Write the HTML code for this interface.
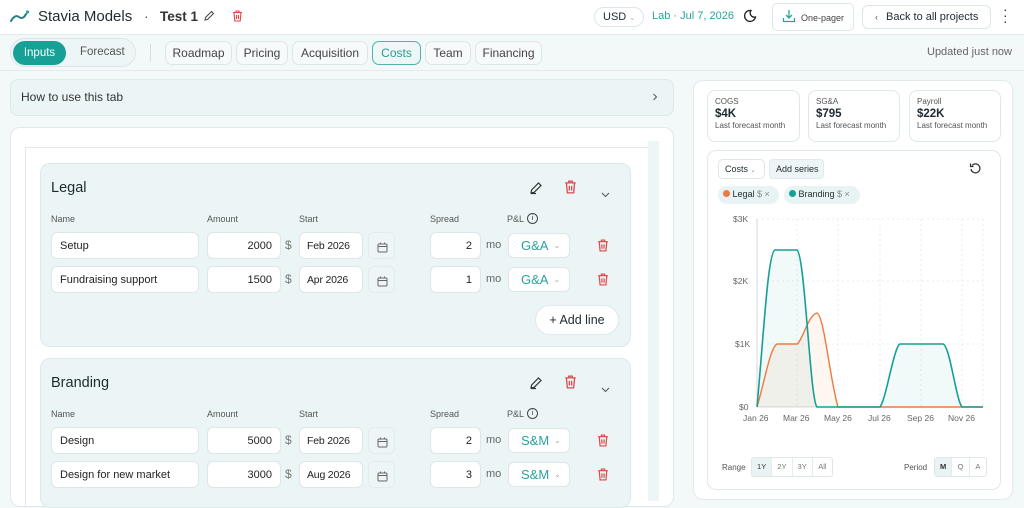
<!DOCTYPE html>
<html><head><meta charset="utf-8"><style>
*{box-sizing:border-box;margin:0;padding:0;white-space:nowrap}
body{width:1024px;height:494px;overflow:hidden;background:#f3f8f9;font-family:"Liberation Sans",sans-serif;color:#1f2a30;position:relative}
.a{position:absolute}
.top{left:0;top:0;width:1024px;height:35px;background:#fff;border-bottom:1px solid #e3ecee}
.pill{border:1px solid #dde7e9;border-radius:7px;background:#f7fafb;font-size:12px;color:#444;display:flex;align-items:center;justify-content:center;height:24px;top:41px}
.lbl{font-size:9px;color:#555}
.inp{background:#fff;border:1px solid #dde6e8;border-radius:6px;height:27px;font-size:11px;display:flex;align-items:center;padding:0 8px;color:#222;overflow:hidden}
.r{justify-content:flex-end}
.cal{background:#eef5f6;border:1px solid #e2ebed;border-radius:6px;width:27px;height:27px}
.sel{background:#fff;border:1px solid #dde6e8;border-radius:6px;height:25px;width:62px;font-size:13px;color:#2aa39a;display:flex;align-items:center;padding-left:12px}
.sel i{font-style:normal;font-size:8px;color:#aaa;margin-left:5px}
.card{background:#ebf5f6;border:1px solid #dce9eb;border-radius:10px}
.stat{background:#fff;border:1px solid #dfe8ea;border-radius:8px;top:90px;width:93px;height:52px;padding:6px 7px}
.stat .t{font-size:8px;color:#555}.stat .v{font-size:11.5px;font-weight:bold;margin-top:2px}.stat .s{font-size:8px;color:#555;margin-top:1px}
.ax{font-size:8.5px;color:#666}
</style></head><body>
<div class="a top"></div>
<svg class="a" style="left:10px;top:8px" width="20" height="16" viewBox="0 0 20 16"><path d="M1 13 Q5 6 9 9 T16 6" fill="none" stroke="#2a7d85" stroke-width="2" stroke-linecap="round"/><circle cx="17.5" cy="4" r="1.6" fill="#2aa39a"/></svg>
<div class="a" style="left:38px;top:8px;font-size:15px;font-weight:500">Stavia Models</div>
<div class="a" style="left:144px;top:8px;font-size:14px;color:#555">·</div>
<div class="a" style="left:160px;top:9px;font-size:13.5px;font-weight:bold;color:#333">Test 1</div>
<svg class="a" style="left:203px;top:10px" width="12" height="12" viewBox="0 0 12 12"><path d="M2 10 L2.5 7.5 L8.5 1.5 L10.5 3.5 L4.5 9.5 Z" fill="none" stroke="#444" stroke-width="1"/></svg>
<svg class="a" style="left:232px;top:10px" width="11" height="12" viewBox="0 0 11 12"><path d="M1 2.5H10M4 2.5V1H7V2.5M2 2.5L2.8 11H8.2L9 2.5M4.5 5V9M6.5 5V9" fill="none" stroke="#e04646" stroke-width="1.1"/></svg>
<div class="a" style="left:594px;top:7px;width:50px;height:20px;border:1px solid #dde6e8;border-radius:10px;font-size:11px;padding:3px 0 0 8px">USD <span style="font-size:7px;color:#999">⌄</span></div>
<div class="a" style="left:652px;top:10px;font-size:11px;color:#2aa39a">Lab · Jul 7, 2026</div>
<svg class="a" style="left:743px;top:9px" width="14" height="14" viewBox="0 0 14 14"><path d="M8 1.5 A5.5 5.5 0 1 0 12.5 8 A4.2 4.2 0 0 1 8 1.5Z" fill="none" stroke="#222" stroke-width="1.3"/></svg>
<div class="a" style="left:772px;top:3px;width:82px;height:28px;border:1px solid #dde6e8;border-radius:5px;font-size:9px;color:#444;padding:9px 0 0 28px">One-pager</div>
<svg class="a" style="left:782px;top:9px" width="14" height="14" viewBox="0 0 14 14"><path d="M7 1V9M4 6L7 9L10 6M1.5 9V12.5H12.5V9" fill="none" stroke="#2aa39a" stroke-width="1.3"/></svg>
<div class="a" style="left:862px;top:5px;width:129px;height:24px;border:1px solid #dde6e8;border-radius:6px;font-size:11px;padding:5px 0 0 12px"><span style="font-size:9px;color:#555;margin-right:8px">‹</span>Back to all projects</div>
<div class="a" style="left:1003px;top:6px;font-size:14px;line-height:6px;color:#333;width:4px;white-space:normal">·<br>·<br>·</div>
<div class="a" style="left:10px;top:38px;width:126px;height:29px;border:1px solid #dbe6e8;border-radius:15px;background:#eef5f6"></div>
<div class="a" style="left:13px;top:41px;width:53px;height:24px;border-radius:12px;background:#16a096;color:#fff;font-size:11.5px;text-align:center;line-height:24px">Inputs</div>
<div class="a" style="left:80px;top:46px;font-size:11.5px;color:#555">Forecast</div>
<div class="a" style="left:150px;top:44px;width:1px;height:18px;background:#d5dfe1"></div>
<div class="a pill" style="left:165px;width:67px">Roadmap</div>
<div class="a pill" style="left:236px;width:52px">Pricing</div>
<div class="a pill" style="left:292px;width:76px">Acquisition</div>
<div class="a pill" style="left:372px;width:49px;border-color:#52b3ab;color:#2a9a92;background:#eef7f7">Costs</div>
<div class="a pill" style="left:425px;width:46px">Team</div>
<div class="a pill" style="left:475px;width:67px">Financing</div>
<div class="a" style="left:927px;top:46px;font-size:11px;color:#666">Updated just now</div>
<div class="a" style="left:0;top:70px;width:1024px;height:1px;background:#e3ecee"></div>
<div class="a card" style="left:10px;top:79px;width:664px;height:37px;border-radius:8px"></div>
<div class="a" style="left:21px;top:90px;font-size:12px;color:#333">How to use this tab</div>
<svg class="a" style="left:652px;top:93px" width="6" height="8" viewBox="0 0 6 8"><path d="M1.5 1L4.5 4L1.5 7" fill="none" stroke="#555" stroke-width="1"/></svg>
<div class="a" style="left:10px;top:127px;width:664px;height:380px;background:#fff;border:1px solid #dfe8ea;border-radius:10px"></div>
<div class="a" style="left:25px;top:147px;width:623px;height:360px;border-left:1px solid #e3eaec;border-top:1px solid #e3eaec"></div>
<div class="a" style="left:648px;top:141px;width:11px;height:360px;background:#eef5f6"></div>
<div class="a card" style="left:40px;top:163px;width:591px;height:184px"></div>
<div class="a card" style="left:40px;top:358px;width:591px;height:150px"></div>
<div id="rows"></div>
<div class="a" style="left:693px;top:80px;width:320px;height:420px;background:#fff;border:1px solid #e2eaec;border-radius:10px"></div>
<div class="a stat" style="left:707px"><div class="t">COGS</div><div class="v">$4K</div><div class="s">Last forecast month</div></div>
<div class="a stat" style="left:808px;width:92px"><div class="t">SG&amp;A</div><div class="v">$795</div><div class="s">Last forecast month</div></div>
<div class="a stat" style="left:909px;width:92px"><div class="t">Payroll</div><div class="v">$22K</div><div class="s">Last forecast month</div></div>
<div class="a" style="left:707px;top:150px;width:294px;height:340px;border:1px solid #dfe8ea;border-radius:9px;background:#fff"></div>
<div class="a" style="left:718px;top:159px;width:47px;height:20px;border:1px solid #dde6e8;border-radius:5px;font-size:9px;padding:4px 0 0 6px">Costs <span style="font-size:6px;color:#888">⌄</span></div>
<div class="a" style="left:769px;top:159px;width:55px;height:20px;background:#eef5f6;border:1px solid #e2eaec;border-radius:4px;font-size:9px;padding:4px 0 0 6px">Add series</div>
<svg class="a" style="left:969px;top:162px" width="13" height="13" viewBox="0 0 13 13"><path d="M3 3.5 A4.5 4.5 0 1 1 2 7" fill="none" stroke="#333" stroke-width="1.2"/><path d="M1.5 1.5V4.5H4.5" fill="none" stroke="#333" stroke-width="1.2"/></svg>
<div class="a" style="left:718px;top:186px;width:61px;height:18px;background:#e8f3f4;border-radius:9px;font-size:9px;padding:3px 0 0 5px"><span style="display:inline-block;width:7px;height:7px;border-radius:50%;background:#f0793f"></span> Legal <span style="color:#888">$ ×</span></div>
<div class="a" style="left:784px;top:186px;width:76px;height:18px;background:#e8f3f4;border-radius:9px;font-size:9px;padding:3px 0 0 5px"><span style="display:inline-block;width:7px;height:7px;border-radius:50%;background:#15a096"></span> Branding <span style="color:#888">$ ×</span></div>
<svg class="a" style="left:707px;top:210px" width="294" height="220" viewBox="707 210 294 220">
<g stroke="#e2e8ea" stroke-dasharray="2 3" stroke-width="0.8">
<line x1="757" y1="219" x2="983" y2="219"/><line x1="757" y1="281" x2="983" y2="281"/><line x1="757" y1="344" x2="983" y2="344"/>
<line x1="797" y1="219" x2="797" y2="407"/><line x1="838" y1="219" x2="838" y2="407"/><line x1="880" y1="219" x2="880" y2="407"/><line x1="921" y1="219" x2="921" y2="407"/><line x1="962" y1="219" x2="962" y2="407"/><line x1="983" y1="219" x2="983" y2="407"/>
</g>
<line x1="757" y1="219" x2="757" y2="407" stroke="#ccd" stroke-width="0.8"/>
<line x1="757" y1="407" x2="983" y2="407" stroke="#ccd" stroke-width="0.8"/>
<path d="M757 407 C765 380 770 348 777 344 L797 344 C803 340 808 315 817 313 C824 315 830 380 838 407 Z" fill="#f0793f" fill-opacity="0.07"/>
<path d="M757 407 C764 330 768 252 775 250 L797 250 C805 255 810 400 817 407 L880 407 C886 400 894 346 900 344 L943 344 C950 346 956 400 962 407 L983 407 Z" fill="#15a096" fill-opacity="0.06"/>
<path d="M757 407 C765 380 770 348 777 344 L797 344 C803 340 808 315 817 313 C824 315 830 380 838 407 L983 407" fill="none" stroke="#f0793f" stroke-width="1.4"/>
<path d="M757 407 C764 330 768 252 775 250 L797 250 C805 255 810 400 817 407 L880 407 C886 400 894 346 900 344 L943 344 C950 346 956 400 962 407 L983 407" fill="none" stroke="#15a096" stroke-width="1.6"/>
</svg>
<div class="a ax" style="left:733px;top:214px">$3K</div>
<div class="a ax" style="left:733px;top:276px">$2K</div>
<div class="a ax" style="left:735px;top:339px">$1K</div>
<div class="a ax" style="left:739px;top:402px">$0</div>
<div class="a ax" style="left:743px;top:413px">Jan 26</div>
<div class="a ax" style="left:783px;top:413px">Mar 26</div>
<div class="a ax" style="left:824px;top:413px">May 26</div>
<div class="a ax" style="left:868px;top:413px">Jul 26</div>
<div class="a ax" style="left:907px;top:413px">Sep 26</div>
<div class="a ax" style="left:948px;top:413px">Nov 26</div>
<div class="a" style="left:722px;top:463px;font-size:8px;color:#555">Range</div>
<div class="a" style="left:751px;top:457px;width:82px;height:20px;border:1px solid #dfe7e9;border-radius:3px;display:flex;font-size:7.5px;color:#777">
<div style="flex:1;background:#eaf3f4;text-align:center;line-height:18px;color:#333">1Y</div><div style="flex:1;text-align:center;line-height:18px;border-left:1px solid #e5ecee">2Y</div><div style="flex:1;text-align:center;line-height:18px;border-left:1px solid #e5ecee">3Y</div><div style="flex:1;text-align:center;line-height:18px;border-left:1px solid #e5ecee">All</div></div>
<div class="a" style="left:904px;top:463px;font-size:8px;color:#555">Period</div>
<div class="a" style="left:934px;top:457px;width:53px;height:20px;border:1px solid #dfe7e9;border-radius:3px;display:flex;font-size:7.5px;color:#777">
<div style="flex:1;background:#eaf3f4;text-align:center;line-height:18px;color:#333;font-weight:bold">M</div><div style="flex:1;text-align:center;line-height:18px;border-left:1px solid #e5ecee">Q</div><div style="flex:1;text-align:center;line-height:18px;border-left:1px solid #e5ecee">A</div></div>
<script>
var pen='<svg width="14" height="14" viewBox="0 0 14 14"><path d="M2 12 L2.6 9 L9.5 2 L12 4.5 L5 11.4 Z M2 12.5 H7" fill="none" stroke="#333" stroke-width="1.2"/></svg>';
var chev='<svg width="9" height="6" viewBox="0 0 9 6"><path d="M1 1L4.5 4.5L8 1" fill="none" stroke="#555" stroke-width="1"/></svg>';
function trash(c,s){return '<svg width="'+s+'" height="'+(s+1)+'" viewBox="0 0 11 12"><path d="M1 2.5H10M4 2.5V1H7V2.5M2 2.5L2.8 11H8.2L9 2.5M4.5 5V9M6.5 5V9" fill="none" stroke="'+c+'" stroke-width="1.1"/></svg>';}
var cal='<svg width="11" height="11" viewBox="0 0 11 11"><rect x="1" y="2" width="9" height="8" rx="1" fill="none" stroke="#666"/><path d="M1 4.5H10M3.5 0.5V2.5M7.5 0.5V2.5" stroke="#666"/></svg>';
var h='';
function sec(y,title,rows,pl){
 h+='<div class="a" style="left:51px;top:'+(y+17)+'px;font-size:14.5px;font-weight:500">'+title+'</div>';
 h+='<div class="a" style="left:529px;top:'+(y+18)+'px">'+pen+'</div>';
 h+='<div class="a" style="left:564px;top:'+(y+17)+'px">'+trash('#e04646',13)+'</div>';
 h+='<div class="a" style="left:601px;top:'+(y+22)+'px">'+chev+'</div>';
 var ly=y+51;
 [['Name',51],['Amount',207],['Start',299],['Spread',430],['P&amp;L',507]].forEach(function(l){h+='<div class="a lbl" style="left:'+l[1]+'px;top:'+ly+'px">'+l[0]+'</div>';});
 h+='<div class="a" style="left:527px;top:'+(ly-1)+'px;width:11px;height:11px;border:1px solid #444;border-radius:50%;font-size:7px;text-align:center;line-height:9px">i</div>';
 rows.forEach(function(r,i){var t=y+69+i*34;
  h+='<div class="a inp" style="left:51px;top:'+t+'px;width:148px">'+r[0]+'</div>';
  h+='<div class="a inp r" style="left:207px;top:'+t+'px;width:74px">'+r[1]+'</div>';
  h+='<div class="a" style="left:285px;top:'+(t+6)+'px;font-size:12px;color:#777">$</div>';
  h+='<div class="a inp" style="left:299px;top:'+t+'px;width:64px;padding:0 7px;font-size:10.5px;letter-spacing:-0.2px">'+r[2]+'</div>';
  h+='<div class="a cal" style="left:368px;top:'+t+'px;padding:7px 0 0 8px">'+cal+'</div>';
  h+='<div class="a inp r" style="left:430px;top:'+t+'px;width:51px">'+r[3]+'</div>';
  h+='<div class="a" style="left:486px;top:'+(t+7)+'px;font-size:11px;color:#666">mo</div>';
  h+='<div class="a sel" style="left:508px;top:'+(t+1)+'px">'+pl+'<i>⌄</i></div>';
  h+='<div class="a" style="left:597px;top:'+(t+7)+'px">'+trash('#e04646',12)+'</div>';
 });
}
sec(163,'Legal',[['Setup','2000','Feb 2026','2'],['Fundraising support','1500','Apr 2026','1']],'G&amp;A');
sec(358,'Branding',[['Design','5000','Feb 2026','2'],['Design for new market','3000','Aug 2026','3']],'S&amp;M');
h+='<div class="a" style="left:535px;top:305px;width:84px;height:30px;background:#fff;border:1px solid #dfe8ea;border-radius:15px;font-size:12.5px;text-align:center;line-height:28px">+ Add line</div>';
document.getElementById('rows').innerHTML=h;
</script>
</body></html>
